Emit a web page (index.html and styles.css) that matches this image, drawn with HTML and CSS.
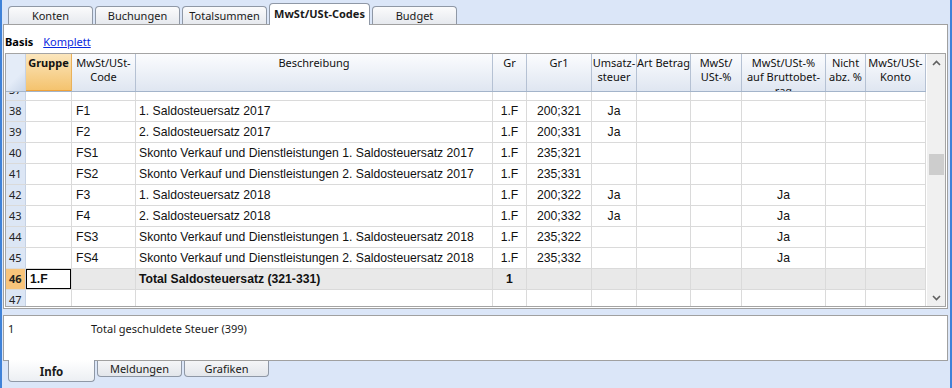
FILE: index.html
```html
<!DOCTYPE html>
<html lang="de">
<head>
    <meta charset="UTF-8">
    <title>MwSt/USt-Codes</title>
    <link rel="stylesheet" href="styles.css">
</head>
<body>
    <div class="app">
        <div class="tabs">
            <div class="tab">Konten</div>
            <div class="tab">Buchungen</div>
            <div class="tab">Totalsummen</div>
            <div class="tab active wide">MwSt/USt-Codes</div>
            <div class="tab">Budget</div>
        </div>

        <div class="panel">
            <div class="views">
                <b>Basis</b>
                <a href="#">Komplett</a>
            </div>

            <div class="grid">
                <div class="grid-main">
                    <div class="row head">
                        <div class="c corner"></div>
                        <div class="c sel">Gruppe</div>
                        <div class="c">MwSt/USt-<br>Code</div>
                        <div class="c">Beschreibung</div>
                        <div class="c">Gr</div>
                        <div class="c">Gr1</div>
                        <div class="c">Umsatz-<br>steuer</div>
                        <div class="c">Art Betrag</div>
                        <div class="c">MwSt/<br>USt-%</div>
                        <div class="c">MwSt/USt-%<br>auf Bruttobet-<br>rag</div>
                        <div class="c">Nicht<br>abz. %</div>
                        <div class="c">MwSt/USt-<br>Konto</div>
                    </div>

                    <div class="rows">
                        <div class="row scrolled">
                            <div class="c n">37</div><div class="c"></div><div class="c"></div><div class="c"></div><div class="c"></div><div class="c"></div><div class="c"></div><div class="c"></div><div class="c"></div><div class="c"></div><div class="c"></div><div class="c"></div>
                        </div>
                        <div class="row">
                            <div class="c n">38</div><div class="c"></div><div class="c">F1</div><div class="c">1. Saldosteuersatz 2017</div><div class="c">1.F</div><div class="c">200;321</div><div class="c">Ja</div><div class="c"></div><div class="c"></div><div class="c"></div><div class="c"></div><div class="c"></div>
                        </div>
                        <div class="row">
                            <div class="c n">39</div><div class="c"></div><div class="c">F2</div><div class="c">2. Saldosteuersatz 2017</div><div class="c">1.F</div><div class="c">200;331</div><div class="c">Ja</div><div class="c"></div><div class="c"></div><div class="c"></div><div class="c"></div><div class="c"></div>
                        </div>
                        <div class="row">
                            <div class="c n">40</div><div class="c"></div><div class="c">FS1</div><div class="c">Skonto Verkauf und Dienstleistungen 1. Saldosteuersatz 2017</div><div class="c">1.F</div><div class="c">235;321</div><div class="c"></div><div class="c"></div><div class="c"></div><div class="c"></div><div class="c"></div><div class="c"></div>
                        </div>
                        <div class="row">
                            <div class="c n">41</div><div class="c"></div><div class="c">FS2</div><div class="c">Skonto Verkauf und Dienstleistungen 2. Saldosteuersatz 2017</div><div class="c">1.F</div><div class="c">235;331</div><div class="c"></div><div class="c"></div><div class="c"></div><div class="c"></div><div class="c"></div><div class="c"></div>
                        </div>
                        <div class="row">
                            <div class="c n">42</div><div class="c"></div><div class="c">F3</div><div class="c">1. Saldosteuersatz 2018</div><div class="c">1.F</div><div class="c">200;322</div><div class="c">Ja</div><div class="c"></div><div class="c"></div><div class="c">Ja</div><div class="c"></div><div class="c"></div>
                        </div>
                        <div class="row">
                            <div class="c n">43</div><div class="c"></div><div class="c">F4</div><div class="c">2. Saldosteuersatz 2018</div><div class="c">1.F</div><div class="c">200;332</div><div class="c">Ja</div><div class="c"></div><div class="c"></div><div class="c">Ja</div><div class="c"></div><div class="c"></div>
                        </div>
                        <div class="row">
                            <div class="c n">44</div><div class="c"></div><div class="c">FS3</div><div class="c">Skonto Verkauf und Dienstleistungen 1. Saldosteuersatz 2018</div><div class="c">1.F</div><div class="c">235;322</div><div class="c"></div><div class="c"></div><div class="c"></div><div class="c">Ja</div><div class="c"></div><div class="c"></div>
                        </div>
                        <div class="row">
                            <div class="c n">45</div><div class="c"></div><div class="c">FS4</div><div class="c">Skonto Verkauf und Dienstleistungen 2. Saldosteuersatz 2018</div><div class="c">1.F</div><div class="c">235;332</div><div class="c"></div><div class="c"></div><div class="c"></div><div class="c">Ja</div><div class="c"></div><div class="c"></div>
                        </div>
                        <div class="row total">
                            <div class="c n">46</div><div class="c cur">1.F</div><div class="c"></div><div class="c">Total Saldosteuersatz (321-331)</div><div class="c">1</div><div class="c"></div><div class="c"></div><div class="c"></div><div class="c"></div><div class="c"></div><div class="c"></div><div class="c"></div>
                        </div>
                        <div class="row">
                            <div class="c n">47</div><div class="c"></div><div class="c"></div><div class="c"></div><div class="c"></div><div class="c"></div><div class="c"></div><div class="c"></div><div class="c"></div><div class="c"></div><div class="c"></div><div class="c"></div>
                        </div>
                    </div>
                </div>

                <div class="scrollbar">
                    <div class="arrow">
                        <svg width="9" height="6" viewBox="0 0 9 6"><polyline points="1,5 4.5,1.5 8,5" fill="none" stroke="#606060" stroke-width="1.6"/></svg>
                    </div>
                    <div class="track">
                        <div class="thumb"></div>
                    </div>
                    <div class="arrow">
                        <svg width="9" height="6" viewBox="0 0 9 6"><polyline points="1,1 4.5,4.5 8,1" fill="none" stroke="#606060" stroke-width="1.6"/></svg>
                    </div>
                </div>
            </div>
        </div>

        <div class="info">
            <span>1</span>
            <span>Total geschuldete Steuer (399)</span>
        </div>

        <div class="tabs bottom">
            <div class="tab active">Info</div>
            <div class="tab">Meldungen</div>
            <div class="tab">Grafiken</div>
        </div>
    </div>
</body>
</html>
```

FILE: styles.css
```css
* {
    margin: 0;
    padding: 0;
    box-sizing: border-box;
}

body {
    font-family: 'Noto Sans', sans-serif;
    font-size: 11px;
    color: #1a1a1a;
    background: #dbe6f8;
}

.app {
    height: 388px;
    border-left: 2px solid #3f82d8;
    border-right: 2px solid #3f82d8;
}

/* Registerkarten */
.tabs {
    display: flex;
    align-items: flex-end;
    gap: 2px;
    height: 24px;
    padding-left: 6px;
}

.tab {
    width: 85px;
    height: 18px;
    border: 1px solid #8f98a6;
    border-bottom: none;
    border-radius: 4px 4px 0 0;
    background: linear-gradient(#fbfbfc, #e6e9ee);
    text-align: center;
    line-height: 17px;
    white-space: nowrap;
}

.tab.wide {
    width: 101px;
}

.tab.active {
    height: 22px;
    background: #fff;
    font-weight: bold;
    line-height: 20px;
    position: relative;
    margin-bottom: -1px;
    z-index: 1;
}

.tabs.bottom {
    align-items: flex-start;
    height: 27px;
}

.tabs.bottom .tab {
    height: 16px;
    border: 1px solid #8f98a6;
    border-top: none;
    border-radius: 0 0 4px 4px;
    line-height: 15px;
    background: linear-gradient(#f4f5f7, #e3e6eb);
}

.tabs.bottom .tab.active {
    height: 22px;
    margin-bottom: 0;
    margin-top: -1px;
    width: 87px;
    line-height: 24px;
    font-size: 11.5px;
    background: linear-gradient(#fff, #eceff3);
}

/* Hauptbereich */
.panel {
    margin: 0 2px 0 1px;
    height: 285px;
    border: 1px solid #a0a0a0;
    background: #fff;
    padding: 0 1px;
}

.views {
    display: flex;
    gap: 10px;
    height: 28px;
    padding-top: 9px;
    line-height: 16px;
}

.views b {
    color: #000;
}

.views a {
    color: #0a28e0;
    text-decoration: underline;
}

.grid {
    display: flex;
    height: 254px;
    border: 1px solid #a4a4a4;
}

.grid-main {
    width: 920px;
    display: flex;
    flex-direction: column;
}

.row {
    display: grid;
    grid-template-columns: 20px 46px 64px 357px 34px 65px 45px 54px 51px 84px 40px 60px;
    height: 21px;
    border-bottom: 1px solid #dadada;
    font-family: 'Liberation Sans', Arial, sans-serif;
    font-size: 12.2px;
    color: #111;
}

.c {
    border-right: 1px solid #dadada;
    padding: 0 3px;
    line-height: 20px;
    white-space: nowrap;
    overflow: hidden;
}

.row > :nth-child(3) {
    padding-left: 4px;
}

.row > :nth-child(5),
.row > :nth-child(6),
.row > :nth-child(7),
.row > :nth-child(10) {
    text-align: center;
    padding: 0;
}

.c.n {
    background: #dce6f5;
    border-right-color: #c6d2e4;
    font-family: 'Noto Sans', sans-serif;
    font-size: 11px;
    color: #222;
}

/* Kopfzeile */
.row.head {
    height: 38px;
    border-bottom: 1px solid #a3b4ca;
    font-family: 'Noto Sans', sans-serif;
    font-size: 11px;
}

.row.head .c {
    background: linear-gradient(#fbfcfe, #dfe6f1);
    border-right-color: #b5c1d3;
    text-align: center;
    line-height: 14px;
    padding: 2px 0 0;
    white-space: nowrap;
}

.row.head .c.corner {
    background: linear-gradient(135deg, #e4ecf8 60%, #c9d6ea);
    border-right-color: #c6d2e4;
}

.row.head .c.sel {
    background: linear-gradient(#fbe6bd, #f4c26c);
    border-right-color: #e9b15a;
    box-shadow: inset 0 -1px 0 #efa23a;
    font-weight: bold;
}

.rows {
    height: 214px;
    overflow: hidden;
}

/* Liste ist gescrollt: Zeile 37 nur teilweise sichtbar */
.row.scrolled {
    margin-top: -12px;
}

.row.total .c {
    background: #e9e9e9;
    font-weight: bold;
}

.row.total .c.n {
    background: #f8c47b;
}

.row.total .c.cur {
    background: #fff;
    box-shadow: inset 0 0 0 1px #000;
    padding-left: 4px;
}

/* Bildlaufleiste */
.scrollbar {
    width: 19px;
    margin-left: 1px;
    background: #f0f0f0;
    display: flex;
    flex-direction: column;
}

.arrow {
    height: 17px;
    display: flex;
    align-items: center;
    justify-content: center;
}

.track {
    flex: 1;
    padding: 83px 1px 0 2px;
}

.thumb {
    height: 21px;
    background: #cdcdcd;
}

/* Infobereich */
.info {
    margin: 6px 2px 0 1px;
    height: 46px;
    border: 1px solid #a0a0a0;
    background: #fff;
    display: grid;
    grid-template-columns: 83px 1fr;
    padding: 5px 4px 0;
    line-height: 16px;
    align-content: start;
}
```
